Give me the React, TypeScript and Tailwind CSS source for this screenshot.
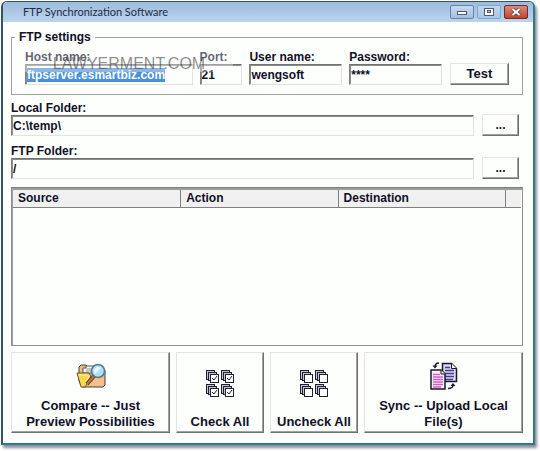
import React, { useEffect, useRef } from 'react'
import clsx from 'clsx'

const sunken = 'h-[21px] w-full min-w-0 rounded-none border border-b-[#e2e2e2] border-r-[#e2e2e2] border-l-[#808080] border-t-[#707070] bg-[#fdfffd] pl-px text-[12px] text-[#101028] shadow-[inset_1px_1px_0_#8c8c8c] outline-none'
const raised = 'border border-b-[#707070] border-r-[#707070] border-l-[#e4e4e4] border-t-[#e4e4e4] bg-[#fdfffd] font-bold text-[#101028] shadow-[inset_-1px_-1px_0_#a0a0a0]'

interface FieldProps {
  id: string
  label: string
  value: string
  selected?: boolean
}

const Field: React.FC<FieldProps> = ({ id, label, value, selected }) => {
  const ref = useRef<HTMLInputElement>(null)

  useEffect(() => {
    if (selected) {
      ref.current?.focus()
      ref.current?.select()
    }
  }, [selected])

  return (
    <div className="flex min-w-0 flex-col">
      <label htmlFor={id} className="text-[12px] leading-[14px] whitespace-nowrap">{label}</label>
      <input
        id={id}
        ref={ref}
        defaultValue={value}
        className={clsx(sunken, 'font-bold selection:bg-[#4a90d8] selection:text-white')}
      />
    </div>
  )
}

const FolderSearchIcon = () => (
  <svg width="30" height="26" viewBox="0 0 30 26" aria-hidden="true">
    <path d="M3 9V4l2-2h5l2 2h14l3 3v15l-2 2H6L3 18z" fill="#e6bd84" stroke="#4a4038" />
    <path d="M7 9V5h3V3h9v7H7z" fill="#fff" stroke="#55555c" />
    <path d="M10 6h7M10 8h6" stroke="#8a8a94" />
    <path d="M8 23l3-8h17v6l-2 2z" fill="#f4c08a" />
    <path d="M1 10h12l2 3-4 8-2 3H5z" fill="#f7d650" stroke="#6b5420" />
    <path d="M3 12h8l2 2-3 5" fill="none" stroke="#fff0a0" />
    <path d="M18 13l-7 8" stroke="#5b3425" strokeWidth="4" />
    <path d="M18 13l-7 8" stroke="#c0764c" strokeWidth="2" />
    <circle cx="22" cy="8" r="6.5" fill="#aee3f5" stroke="#56768f" strokeWidth="1.5" />
    <path d="M18 9c0-3 2-5 5-5l2 1-6 6z" fill="#effcff" />
  </svg>
)

const STACKS = [[0, 0], [15, 0], [0, 14], [15, 14]]

const StackIcon = ({ checked }: { checked: boolean }) => (
  <svg width="29" height="28" viewBox="0 0 29 28" shapeRendering="crispEdges" aria-hidden="true">
    {STACKS.map(([x, y]) => (
      <g key={`${x}-${y}`} transform={`translate(${x} ${y})`} stroke="#202030">
        <rect x="0.5" y="0.5" width="8" height="9" fill="#c4c4d0" />
        <rect x="2.5" y="2.5" width="8" height="8" fill="#c4c4d0" />
        <rect x="4.5" y="4.5" width="8" height="8" fill="#fff" />
        {checked && <path d="M6 8l2 2 3-4" fill="none" shapeRendering="auto" />}
      </g>
    ))}
  </svg>
)

const SyncIcon = () => (
  <svg width="28" height="28" viewBox="0 0 28 28" aria-hidden="true">
    <path d="M12.5 1.5h9l5 5v13h-14z" fill="#d8d8f0" stroke="#181828" strokeWidth="1.5" />
    <path d="M21.5 1.5v5h5" fill="#fff" stroke="#181828" />
    <path d="M15 5.5h5M15 8.5h9M15 11.5h9M15 14.5h9M15 17.5h8" stroke="#443c98" strokeWidth="1.5" />
    <path d="M1 8h10l4 4v15H1z" fill="#fff0ff" stroke="#181828" strokeWidth="1.5" />
    <path d="M11 8v4h4" fill="#fff" stroke="#181828" />
    <path d="M3 12.5h7M3 15h10M3 17.5h10M3 20h10M3 22.5h10M3 25h8" stroke="#d85cc8" strokeWidth="1.5" />
    <path d="M9 1C6 1 5 2 5 5" fill="none" stroke="#181828" strokeWidth="1.5" />
    <path d="M2.5 3.5h5L5 6.5z" fill="#181828" />
    <path d="M18 26.5c4 0 5-1 5-4" fill="none" stroke="#181828" strokeWidth="1.5" />
    <path d="M20.5 24h5L23 21z" fill="#181828" />
  </svg>
)

const TitleBar = () => (
  <div className="flex h-5 items-center justify-between bg-linear-to-b from-[#9dbbdc] to-[#bcd4ec] pr-[5px] pl-5">
    <h1 className="font-[Lato,sans-serif] text-[11px] leading-5 text-[#1c2c48]">FTP Synchronization Software</h1>
    <div className="flex gap-[3px]">
      <button aria-label="Minimize" className="flex h-[14px] w-6 items-center justify-center rounded-[2px] border border-[#6384ac] bg-linear-to-b from-[#c8daee] to-[#a4c0e0]">
        <svg width="10" height="6" viewBox="0 0 10 6"><rect x="0.5" y="2.5" width="9" height="3" fill="#fff" stroke="#545c6c" /></svg>
      </button>
      <button aria-label="Maximize" className="flex h-[14px] w-6 items-center justify-center rounded-[2px] border border-[#84a6ce] bg-linear-to-b from-[#c0d6ee] to-[#a8c6e6]">
        <svg width="10" height="8" viewBox="0 0 10 8">
          <rect x="0.5" y="0.5" width="9" height="7" fill="#fff" stroke="#545c6c" />
          <rect x="3.5" y="2.5" width="3" height="2" fill="#a8c6e6" stroke="#545c6c" />
        </svg>
      </button>
      <button aria-label="Close" className="flex h-[14px] w-6 items-center justify-center rounded-[2px] border border-[#6c2c30] bg-linear-to-b from-[#d88c7c] to-[#c04028]">
        <svg width="10" height="8" viewBox="0 0 10 8">
          <path d="M1.5 1l7 6M8.5 1l-7 6" stroke="#5c3038" strokeWidth="3.5" />
          <path d="M1.5 1l7 6M8.5 1l-7 6" stroke="#fff" strokeWidth="2" />
        </svg>
      </button>
    </div>
  </div>
)

const FolderRow = ({ id, label, value }: { id: string; label: string; value: string }) => (
  <div className="flex items-end gap-2 pr-1">
    <div className="min-w-0 flex-1">
      <Field id={id} label={label} value={value} />
    </div>
    <button aria-label={`Browse ${label}`} className={clsx(raised, 'h-[22px] w-[37px] text-[12px] leading-[18px]')}>...</button>
  </div>
)

interface ActionProps {
  icon: React.ReactNode
  children: React.ReactNode
}

const ActionButton: React.FC<ActionProps> = ({ icon, children }) => (
  <button className={clsx(raised, 'flex h-[81px] min-w-0 flex-col items-center pb-[2px] text-[13px] leading-4')}>
    <span className="flex flex-1 items-center">{icon}</span>
    <span>{children}</span>
  </button>
)

const App = () => {
  return (
    <div className="bg-white pt-px pr-[5px] pb-[6px] pl-px font-['Liberation_Sans',Arial,sans-serif] text-[#101028]">
      <main className="overflow-hidden rounded-t-[6px] border-2 border-t border-[#34545f] border-r-[#2c7c88] border-b-[#2c7c88] bg-[#fdfffd] shadow-[2px_3px_3px_#8c8c98]">
        <TitleBar />
        <div className="pt-2 pr-[10px] pb-[10px] pl-2 font-bold">
          <fieldset className="relative border border-[#a0a0a0] px-[13px] pb-[9px]">
            <legend className="-ml-[10px] px-1 text-[12px] leading-[14px]">FTP settings</legend>
            <div className="flex items-end gap-2 pt-[6px]">
              <div className="grid flex-1 grid-cols-[168fr_43fr_93fr_93fr] gap-[7px]">
                <Field id="host" label="Host name:" value="ftpserver.esmartbiz.com" selected />
                <Field id="port" label="Port:" value="21" />
                <Field id="user" label="User name:" value="wengsoft" />
                <div className="flex min-w-0 flex-col">
                  <label htmlFor="password" className="text-[12px] leading-[14px]">Password:</label>
                  <input id="password" defaultValue="****" className={sunken} />
                </div>
              </div>
              <button className={clsx(raised, 'h-[22px] w-[59px] text-[13px] leading-4')}>Test</button>
            </div>
            <div className="pointer-events-none absolute top-[6px] left-[13px] w-[208px] bg-white/35 pt-[6px] text-center text-[16px] leading-4 font-normal text-[#404040]/60">
              LAWYERMENT.COM
            </div>
          </fieldset>

          <div className="flex flex-col gap-2 pt-[6px]">
            <FolderRow id="local" label="Local Folder:" value="C:\temp\" />
            <FolderRow id="ftp" label="FTP Folder:" value="/" />
          </div>

          <div className="mt-2 h-[159px] border border-[#909090] border-t-[#808080] shadow-[inset_1px_2px_0_#9c9c9c]">
            <div className="pt-[2px] pr-px pl-px">
              <table className="w-full table-fixed border-collapse text-left text-[12px]">
                <thead>
                  <tr className="h-[17px] border-b border-[#808080] bg-[#f0f0f0]">
                    <th className="w-[33%] border-r border-[#808080] pl-[5px] leading-4">Source</th>
                    <th className="w-[31%] border-r border-[#808080] pl-[5px] leading-4">Action</th>
                    <th className="w-[33%] border-r border-[#808080] pl-[5px] leading-4">Destination</th>
                    <th />
                  </tr>
                </thead>
              </table>
            </div>
          </div>

          <div className="mt-[6px] grid grid-cols-[159fr_88fr_88fr_159fr] gap-[6px]">
            <ActionButton icon={<FolderSearchIcon />}>Compare -- Just<br />Preview Possibilities</ActionButton>
            <ActionButton icon={<StackIcon checked />}>Check All</ActionButton>
            <ActionButton icon={<StackIcon checked={false} />}>Uncheck All</ActionButton>
            <ActionButton icon={<SyncIcon />}>Sync -- Upload Local<br />File(s)</ActionButton>
          </div>
        </div>
      </main>
    </div>
  )
}

export default App
